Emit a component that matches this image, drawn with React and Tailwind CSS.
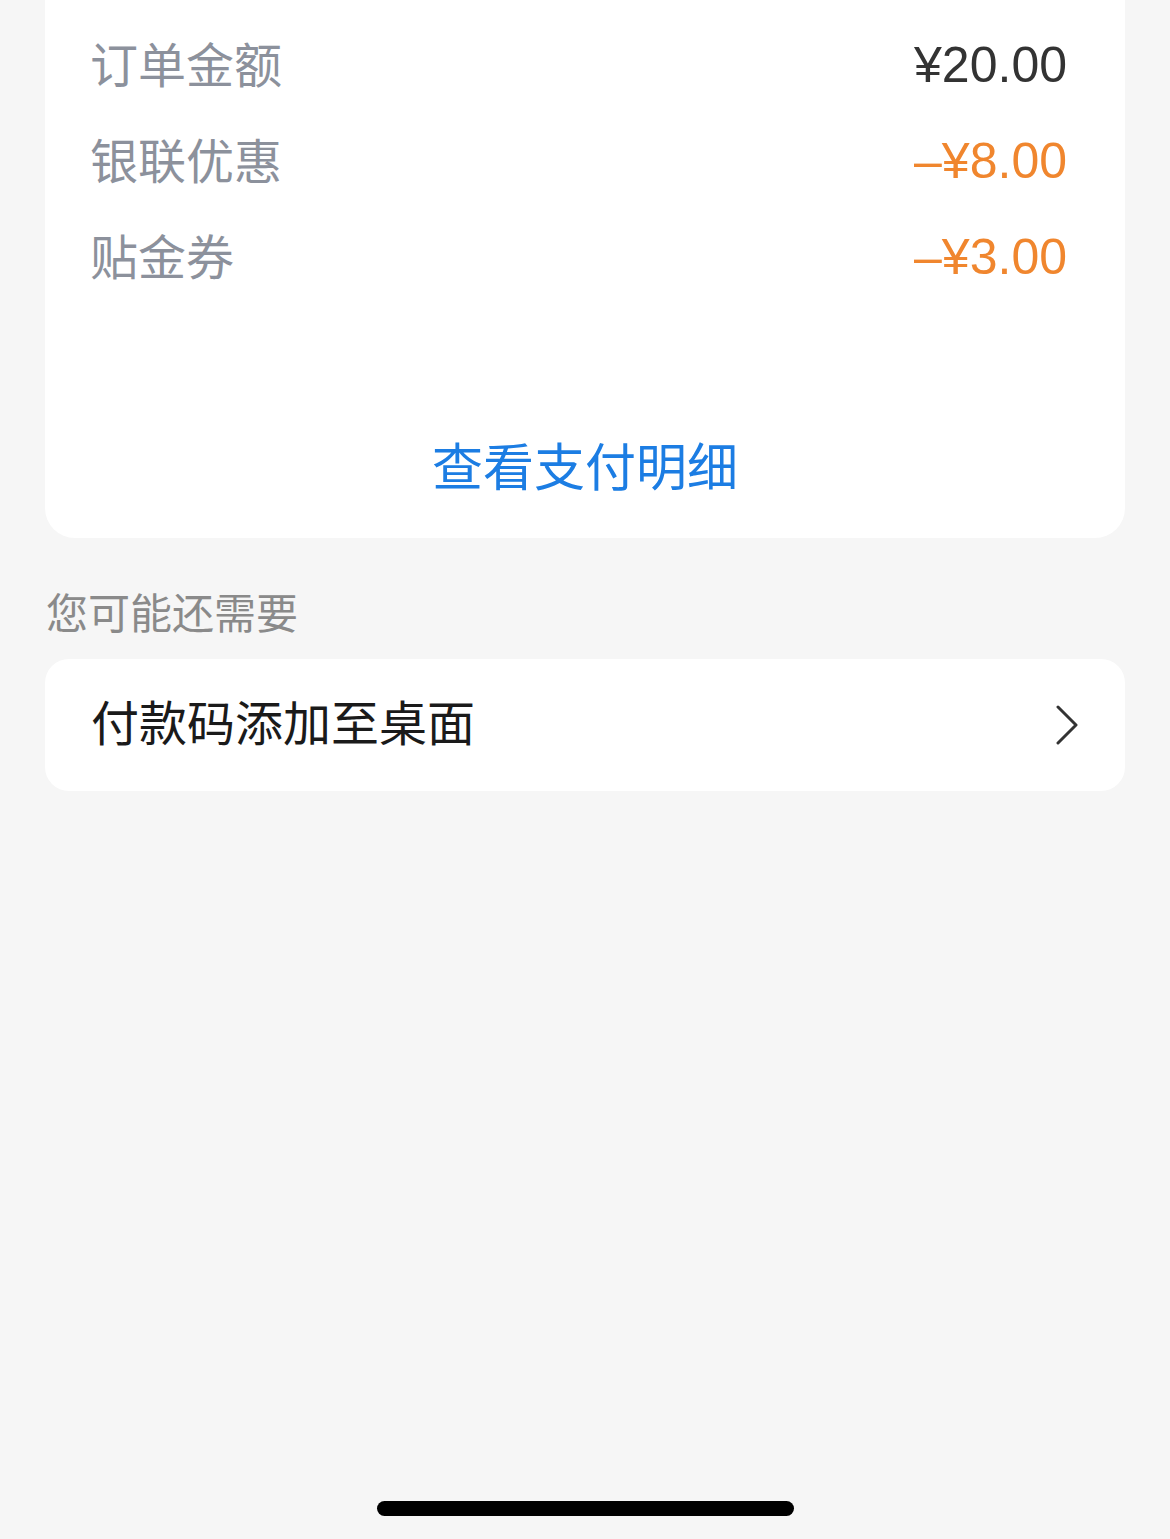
const font = { fontFamily: '"Noto Sans CJK SC", "Liberation Sans", sans-serif' };

const rows = [
  { label: "订单金额", value: "¥20.00", color: "text-[#333333]" },
  { label: "银联优惠", value: "–¥8.00", color: "text-[#f0862e]" },
  { label: "贴金券", value: "–¥3.00", color: "text-[#f0862e]" },
];

export default function App() {
  return (
    <div className="w-[1170px] h-[1539px] bg-[#f6f6f6] flex flex-col" style={font}>
      <div className="mx-[45px] bg-white rounded-b-[30px] pt-[17px] pb-[14px]">
        {rows.map((r) => (
          <div key={r.label} className="h-[96px] pl-[45px] pr-[58px] flex items-center justify-between">
            <span className="text-[48px] text-[#8c919c] leading-none pb-[6px]">{r.label}</span>
            <span
              className={`text-[50px] leading-none ${r.color}`}
              style={{ fontFamily: '"Liberation Sans", sans-serif' }}
            >
              {r.value}
            </span>
          </div>
        ))}
        <div className="h-[120px] mt-[99px] flex items-center justify-center">
          <span className="text-[51px] text-[#1c7de3] leading-none">查看支付明细</span>
        </div>
      </div>

      <div className="pl-[46px] pt-[24px] h-[121px] flex items-center">
        <span className="text-[42px] text-[#8a8a8a] leading-none">您可能还需要</span>
      </div>

      <div className="mx-[45px] h-[132px] bg-white rounded-[24px] pl-[46px] pr-[47px] flex items-center justify-between">
        <span className="text-[48px] text-[#1a1a1a] leading-none pb-[10px]">付款码添加至桌面</span>
        <svg width="22" height="40" viewBox="0 0 22 40" fill="none">
          <path d="M2 2 L20 20 L2 38" stroke="#333" strokeWidth="3" strokeLinecap="round" strokeLinejoin="round" />
        </svg>
      </div>

      <div className="flex-1" />
      <div className="flex justify-center pb-[23px]">
        <div className="w-[417px] h-[15px] rounded-full bg-black" />
      </div>
    </div>
  );
}
